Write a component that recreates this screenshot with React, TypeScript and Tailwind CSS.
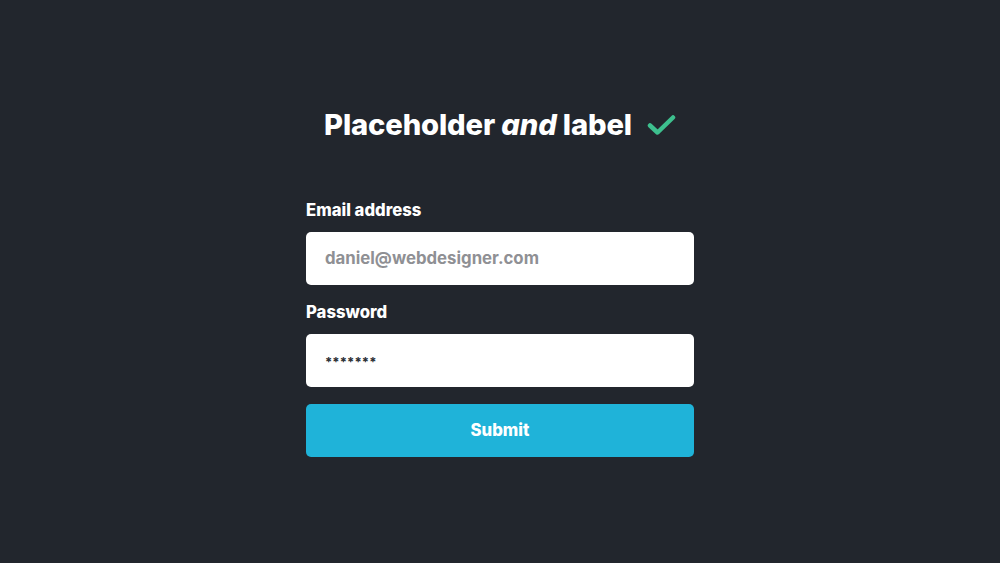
import React from "react";

export default function App() {
  return (
    <div
      className="w-[1000px] h-[563px] bg-[#22262d] flex flex-col items-center"
      style={{ fontFamily: "Inter, 'Noto Sans', sans-serif" }}
    >
      <div className="mt-[108px] h-[34px] flex items-center">
        <h1 className="text-[29.2px] leading-[34px] font-extrabold text-white tracking-[-0.15px]">
          Placeholder <em className="italic">and</em> label
        </h1>
        <svg className="ml-[15px]" width="29" height="22" viewBox="0 0 29 22" fill="none">
          <path d="M3 11.5L10.5 18.5L26 3.5" stroke="#3dbf8e" strokeWidth="4.5" strokeLinecap="round" strokeLinejoin="round" />
        </svg>
      </div>
      <form className="mt-[58px] w-[388px] flex flex-col" onSubmit={(e) => e.preventDefault()}>
        <label className="h-[20px] leading-[20px] text-[16.7px] font-extrabold text-white">Email address</label>
        <div className="mt-[12px] h-[53px] bg-white rounded-[5px] flex items-center pl-[19px] pr-[18px]">
          <span className="text-[16.8px] font-bold text-[#8f9094]">daniel@webdesigner.com</span>
        </div>
        <label className="mt-[17px] h-[20px] leading-[20px] text-[16.7px] font-extrabold text-white">Password</label>
        <div className="mt-[12px] h-[53px] bg-white rounded-[5px] flex items-center pl-[19px] pr-[18px]">
          <span className="text-[13px] font-bold text-[#2a2d33] tracking-[0.1px] pt-[4px]">*******</span>
        </div>
        <button className="mt-[17px] h-[53px] bg-[#1fb3d9] rounded-[5px] text-white text-[16.7px] font-extrabold flex items-center justify-center">
          Submit
        </button>
      </form>
    </div>
  );
}
